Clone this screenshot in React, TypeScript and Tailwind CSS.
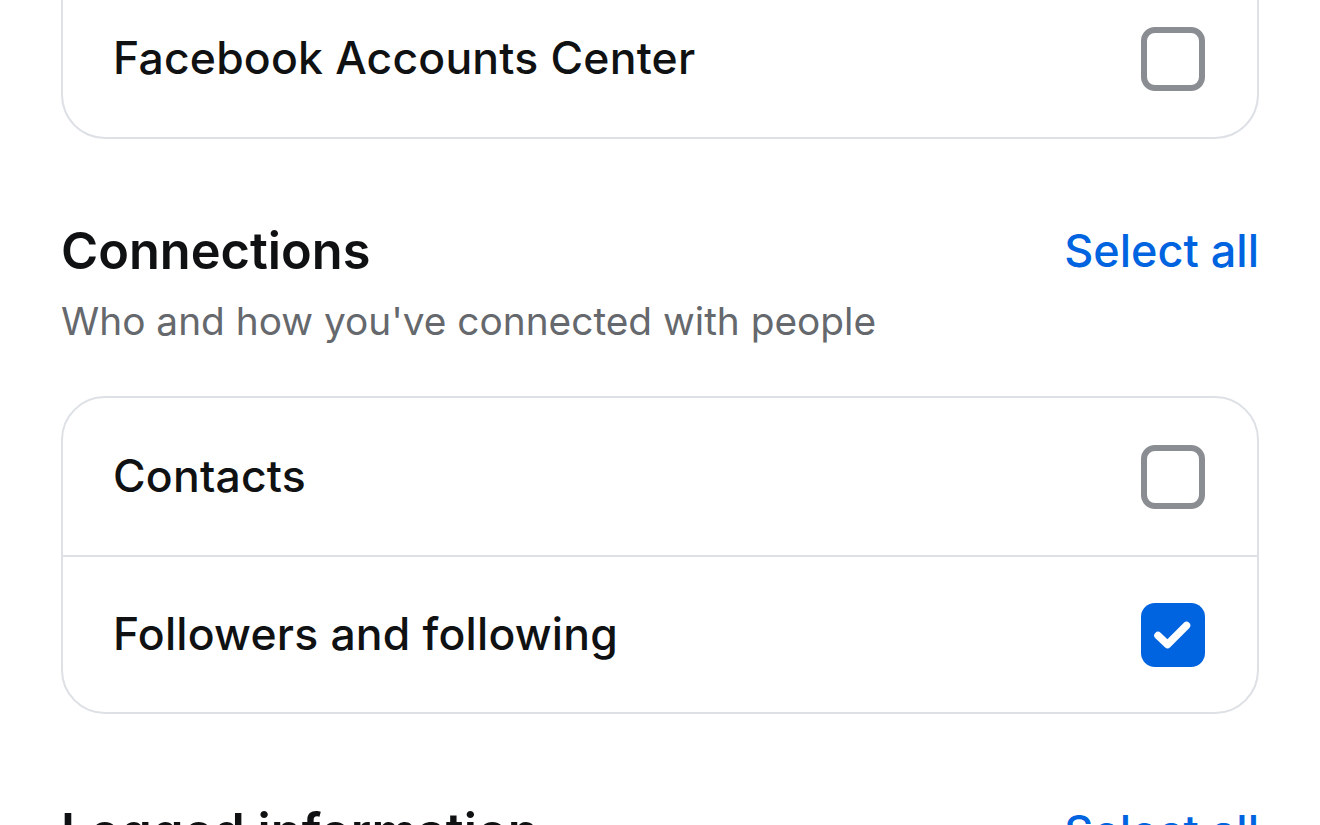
import React from "react";

const font = { fontFamily: "Inter, 'Noto Sans', sans-serif" };

function Checkbox({ checked }: { checked?: boolean }) {
  if (checked) {
    return (
      <div className="flex h-[64px] w-[64px] items-center justify-center rounded-[14px] bg-[#0064e0]">
        <svg width="64" height="64" viewBox="0 0 64 64" fill="none">
          <path d="M17 32.5 L26.5 41.5 L45.5 22.5" stroke="white" strokeWidth="7.5" strokeLinecap="round" strokeLinejoin="round" />
        </svg>
      </div>
    );
  }
  return <div className="h-[64px] w-[64px] rounded-[14px] border-[6px] border-[#8a8d91] bg-white" />;
}

function Row({ label, checked, divider }: { label: string; checked?: boolean; divider?: boolean }) {
  return (
    <div className={`flex h-[157px] items-center justify-between pl-[50px] pr-[52px] ${divider ? "border-t-2 border-[#dde0e4]" : ""}`}>
      <span className="text-[44.5px] font-medium text-[#101112] tracking-[0.2px]">{label}</span>
      <Checkbox checked={checked} />
    </div>
  );
}

function SectionHeader({ title, subtitle }: { title: string; subtitle?: string }) {
  return (
    <div className="flex flex-col">
      <div className="flex items-start justify-between">
        <h2 className="text-[50.5px] leading-[60px] font-semibold text-[#101112]">{title}</h2>
        <button className="text-[45px] leading-[60px] font-medium text-[#0064e0]">Select all</button>
      </div>
      {subtitle && <p className="mt-[16px] text-[38.8px] leading-[48px] text-[#65686c]">{subtitle}</p>}
    </div>
  );
}

export default function App() {
  return (
    <div className="h-[825px] w-[1320px] overflow-hidden bg-white" style={font}>
      <div className="flex flex-col px-[61px]">
        <div className="mt-[-20px] rounded-b-[44px] border-2 border-t-0 border-[#dde0e4]">
          <Row label="Facebook Accounts Center" />
        </div>
        <div className="mt-[82px]">
          <SectionHeader title="Connections" subtitle="Who and how you've connected with people" />
        </div>
        <div className="mt-[51px] rounded-[44px] border-2 border-[#dde0e4]">
          <Row label="Contacts" />
          <Row label="Followers and following" checked divider />
        </div>
        <div className="mt-[88px]">
          <SectionHeader title="Logged information" />
        </div>
      </div>
    </div>
  );
}
